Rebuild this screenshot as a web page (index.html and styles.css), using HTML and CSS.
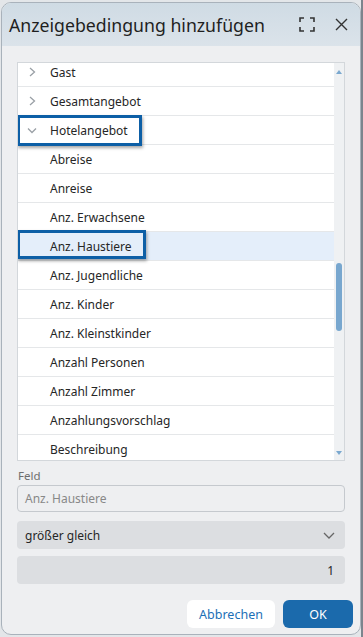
FILE: index.html
```html
<!DOCTYPE html>
<html lang="de">
<head>
    <meta charset="UTF-8">
    <meta name="viewport" content="width=device-width, initial-scale=1.0">
    <title>Anzeigebedingung hinzufügen</title>
    <link rel="stylesheet" href="styles.css">
</head>
<body>
    <div class="dialog">
        <div class="dialog-header">
            <h1>Anzeigebedingung hinzufügen</h1>
            <div class="header-tools">
                <button class="icon-btn" title="Vollbild">
                    <svg width="16" height="15" viewBox="0 0 16 15" fill="none" stroke="#333" stroke-width="1.6">
                        <path d="M1 5V1h4M11 1h4v4M15 10v4h-4M5 14H1v-4"/>
                    </svg>
                </button>
                <button class="icon-btn" title="Schließen">
                    <svg width="13" height="13" viewBox="0 0 13 13" fill="none" stroke="#333" stroke-width="1.4">
                        <path d="M1 1l11 11M12 1L1 12"/>
                    </svg>
                </button>
            </div>
        </div>

        <div class="dialog-body">
            <div class="tree-box">
                <div class="tree-scroll">
                    <div class="tree-rows">
                        <div class="tree-row">
                            <span class="chevron"><svg width="7" height="10" viewBox="0 0 7 10" fill="none" stroke="#9aa0a6" stroke-width="1.3"><path d="M1 1l4.5 4L1 9"/></svg></span>
                            Gast
                        </div>
                        <div class="tree-row">
                            <span class="chevron"><svg width="7" height="10" viewBox="0 0 7 10" fill="none" stroke="#9aa0a6" stroke-width="1.3"><path d="M1 1l4.5 4L1 9"/></svg></span>
                            Gesamtangebot
                        </div>
                        <div class="tree-row">
                            <span class="chevron"><svg width="10" height="7" viewBox="0 0 10 7" fill="none" stroke="#9aa0a6" stroke-width="1.3"><path d="M1 1.5l4 4 4-4"/></svg></span>
                            Hotelangebot
                            <span class="mark mark-parent"></span>
                        </div>
                        <div class="tree-row">Abreise</div>
                        <div class="tree-row">Anreise</div>
                        <div class="tree-row">Anz. Erwachsene</div>
                        <div class="tree-row selected">
                            Anz. Haustiere
                            <span class="mark mark-child"></span>
                        </div>
                        <div class="tree-row">Anz. Jugendliche</div>
                        <div class="tree-row">Anz. Kinder</div>
                        <div class="tree-row">Anz. Kleinstkinder</div>
                        <div class="tree-row">Anzahl Personen</div>
                        <div class="tree-row">Anzahl Zimmer</div>
                        <div class="tree-row">Anzahlungsvorschlag</div>
                        <div class="tree-row">Beschreibung</div>
                    </div>
                </div>
                <div class="scrollbar">
                    <span class="arrow arrow-up"></span>
                    <div class="track">
                        <div class="thumb"></div>
                    </div>
                    <span class="arrow arrow-down"></span>
                </div>
            </div>

            <div class="field-label">Feld</div>
            <div class="input">Anz. Haustiere</div>

            <div class="select">
                <span>größer gleich</span>
                <svg width="12" height="7" viewBox="0 0 12 7" fill="none" stroke="#666" stroke-width="1.3"><path d="M1 1l5 5 5-5"/></svg>
            </div>

            <div class="number">1</div>

            <div class="actions">
                <button class="btn btn-cancel">Abbrechen</button>
                <button class="btn btn-ok">OK</button>
            </div>
        </div>
    </div>
</body>
</html>
```

FILE: styles.css
```css
body {
    margin: 0;
    height: 637px;
    overflow: hidden;
    font-family: "Noto Sans", "Open Sans", sans-serif;
    background: linear-gradient(to right, #e3e6e9 0, #e3e6e9 361px, #7c848d 361px);
}
.dialog {
    width: 358px;
    height: 631px;
    margin: 2px 0 0 1px;
    border: 1px solid #a9b2bb;
    border-radius: 10px;
    background-color: #eeeff1;
    overflow: hidden;
    display: flex;
    flex-direction: column;
}
.dialog-header {
    height: 43px;
    flex-shrink: 0;
    padding: 0 12px 0 7px;
    display: flex;
    align-items: center;
    justify-content: space-between;
    background: linear-gradient(to bottom, #cfdbe4, #dbe3ea);
}
.dialog-header h1 {
    margin: 0;
    font-size: 17.7px;
    font-weight: normal;
    color: #1f1f1f;
}
.header-tools {
    display: flex;
    align-items: center;
    gap: 20px;
}
.icon-btn {
    border: none;
    background: none;
    padding: 0;
    display: flex;
    cursor: pointer;
}
.dialog-body {
    padding: 16px 15px 0 15px;
    display: flex;
    flex-direction: column;
}
.tree-box {
    height: 397px;
    flex-shrink: 0;
    border: 1px solid #d3d7db;
    background-color: white;
    display: flex;
}
.tree-scroll {
    flex: 1;
    overflow: hidden;
}
.tree-rows {
    margin-top: -5px;
}
.tree-row {
    position: relative;
    height: 28px;
    border-bottom: 1px solid #e5e7e9;
    display: flex;
    align-items: center;
    padding-left: 32px;
    font-size: 12px;
    color: #262626;
}
.tree-row.selected {
    background-color: #e4eefa;
}
.chevron {
    position: absolute;
    left: 8px;
    top: 0;
    bottom: 0;
    width: 12px;
    display: flex;
    align-items: center;
    justify-content: center;
}
.mark {
    position: absolute;
    border: 3px solid #0d5fa6;
    box-shadow: 1px 2px 3px rgba(0, 0, 0, 0.35);
    pointer-events: none;
}
.mark-parent {
    left: -1px;
    top: -1px;
    width: 119px;
    height: 25px;
}
.mark-child {
    left: -1px;
    top: -2px;
    width: 123px;
    height: 23px;
}
.scrollbar {
    width: 10px;
    background-color: #eff1f3;
    display: flex;
    flex-direction: column;
    align-items: center;
    padding: 7px 0 5px;
}
.arrow {
    width: 0;
    height: 0;
    border-left: 3.5px solid transparent;
    border-right: 3.5px solid transparent;
}
.arrow-up {
    border-bottom: 4px solid #7aa8cf;
}
.arrow-down {
    border-top: 4px solid #7aa8cf;
}
.track {
    flex: 1;
    width: 100%;
    display: flex;
    justify-content: center;
    padding-top: 189px;
}
.thumb {
    width: 6px;
    height: 68px;
    border-radius: 3px;
    background-color: #78a7cf;
}
.field-label {
    margin-top: 7px;
    line-height: 16px;
    font-size: 11.5px;
    color: #6e6e6e;
    padding-left: 1px;
}
.input {
    margin-top: 1px;
    height: 25px;
    flex-shrink: 0;
    border: 1px solid #c5c9ce;
    border-radius: 4px;
    padding: 0 7px;
    display: flex;
    align-items: center;
    font-size: 12px;
    color: #888;
}
.select {
    margin-top: 9px;
    height: 28px;
    flex-shrink: 0;
    border-radius: 4px;
    background-color: #dcdee1;
    padding: 0 10px 0 8px;
    display: flex;
    align-items: center;
    justify-content: space-between;
    font-size: 12px;
    color: #262626;
}
.number {
    margin-top: 7px;
    height: 28px;
    flex-shrink: 0;
    border-radius: 4px;
    background-color: #dcdee1;
    padding: 0 11px;
    display: flex;
    align-items: center;
    justify-content: flex-end;
    font-size: 12px;
    color: #262626;
}
.actions {
    margin-top: 16px;
    display: flex;
    justify-content: flex-end;
    gap: 8px;
    margin-right: -8px;
}
.btn {
    height: 28px;
    border: none;
    border-radius: 6px;
    font-family: "Noto Sans", "Open Sans", sans-serif;
    font-size: 12.5px;
    cursor: pointer;
}
.btn-cancel {
    width: 88px;
    background-color: white;
    color: #1c6fb6;
}
.btn-ok {
    width: 70px;
    background-color: #1b6aac;
    color: white;
}
```
